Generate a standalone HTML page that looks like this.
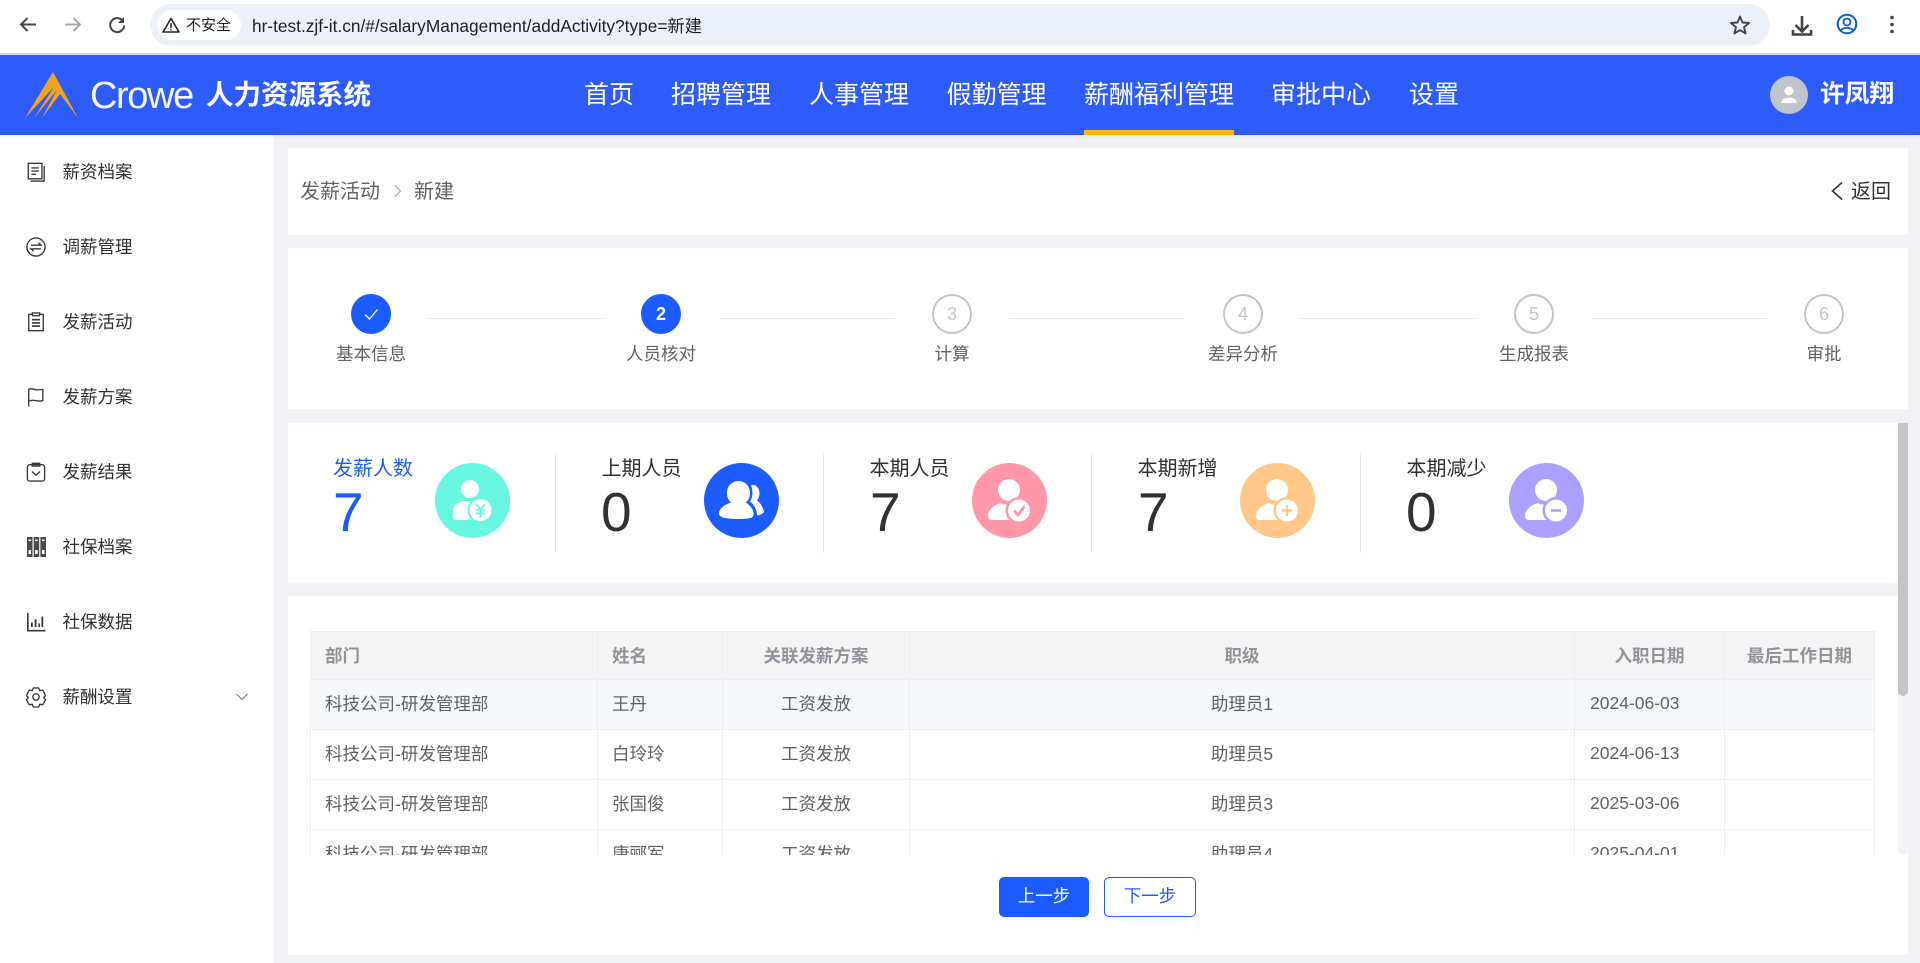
<!DOCTYPE html>
<html lang="zh-CN"><head><meta charset="utf-8"><title>人力资源系统</title>
<style>
html,body{margin:0;padding:0;width:1920px;height:963px;overflow:hidden;background:#f0f2f5}
body{position:relative;font-family:"Liberation Sans","Noto Sans CJK SC",sans-serif;color:#303133}
.a,.t{position:absolute}
.t{white-space:nowrap}
.card{position:absolute;background:#fff}
svg{position:absolute;overflow:visible}
.nav{position:absolute;top:75px;height:40px;line-height:40px;font-size:25px;color:#fff;white-space:nowrap}
.side{position:absolute;left:62.5px;height:26px;line-height:26px;font-size:17.5px;color:#303133;white-space:nowrap}
.si{left:26px;width:20px;height:20px;fill:none;stroke:#3a3a3a;stroke-width:1.5}
.dot{position:absolute;top:294px;width:40px;height:40px;box-sizing:border-box;border-radius:50%;text-align:center;font-size:18px;line-height:36px;border:2.5px solid #c0c4cc;color:#c0c4cc;background:#fff}
.dot.on{background:#1c5cff;border-color:#1c5cff;color:#fff;font-weight:700}
.ln{position:absolute;top:317.5px;height:1px;width:174px;background:#e4e7ed}
.lb{position:absolute;top:341px;height:26px;line-height:26px;width:160px;text-align:center;font-size:17.5px;color:#606266}
.st{position:absolute;top:455px;height:28px;line-height:28px;font-size:20px;color:#303133;white-space:nowrap}
.nm{position:absolute;top:481px;height:62px;line-height:62px;font-size:55px;color:#303133}
.dv{position:absolute;top:453px;width:1px;height:100px;background:#e6e6e6}
.tw{position:absolute;left:310px;top:631px;width:1565px;height:224px;overflow:hidden}
table{border-collapse:collapse;table-layout:fixed;width:1565px;font-size:17.5px;color:#606266}
th,td{border:1px solid #ebeef5;padding:0 15px;white-space:nowrap;text-align:center;box-sizing:border-box}
th{height:48px;background:#f4f4f5;color:#909399;font-weight:700;padding-bottom:1px}
td{height:50px;padding-bottom:2px}
th:nth-child(-n+2),td:nth-child(-n+2){padding-left:14px}
.l{text-align:left}
.btn{position:absolute;top:877px;height:40px;box-sizing:border-box;border-radius:5px;text-align:center;font-size:17.5px;line-height:36px;border:1px solid #1c5cff}
</style></head><body>

<!-- browser chrome -->
<div class="a" style="left:0;top:0;width:1920px;height:53px;background:#fff"></div>
<div class="a" style="left:0;top:53px;width:1920px;height:2px;background:#d9dadc"></div>
<div class="a" style="left:150px;top:4px;width:1620px;height:42px;border-radius:21px;background:#ecf0f9"></div>
<div class="a" style="left:157px;top:10px;width:84px;height:30px;border-radius:15px;background:#fff"></div>
<svg style="left:0;top:0" width="1920" height="53" fill="none">
<path d="M36 24.500H21M27.500 18l-6.500 6.500 6.500 6.500" stroke="#454545" stroke-width="2"/>
<path d="M65 24.500h15M73.500 18l6.500 6.500-6.500 6.500" stroke="#a9a9a9" stroke-width="2"/>
<path d="M122.500 20.500a7 7 0 1 0 1.700 5" stroke="#454545" stroke-width="2"/><path d="M124 17v6h-6z" fill="#454545"/>
<path d="M171 18.500l8 13.500h-16z" stroke="#222" stroke-width="1.600" stroke-linejoin="round"/><path d="M171 23v5M171 29.200v1.300" stroke="#222" stroke-width="1.500"/>
<path d="M1740 16.500l2.500 6 6.500.5-5 4.200 1.600 6.300-5.600-3.400-5.600 3.400 1.600-6.300-5-4.200 6.500-.5z" stroke="#454545" stroke-width="1.900" stroke-linejoin="round"/>
<path d="M1802 16v15M1795.500 25l6.500 6.500 6.500-6.500" stroke="#454545" stroke-width="2.600"/><path d="M1793 30v4.500h18V30" stroke="#454545" stroke-width="2.600"/>
<circle cx="1847" cy="24" r="9.300" stroke="#0b5ed7" stroke-width="2"/><circle cx="1847" cy="22" r="3.500" stroke="#0b5ed7" stroke-width="1.800"/><path d="M1840.500 30.500c3-3.500 10-3.500 13 0" stroke="#0b5ed7" stroke-width="1.800"/>
<circle cx="1892" cy="17.500" r="1.800" fill="#454545"/><circle cx="1892" cy="24.500" r="1.800" fill="#454545"/><circle cx="1892" cy="31.500" r="1.800" fill="#454545"/>
</svg>
<div class="t" style="left:186px;top:15px;line-height:22px;font-size:15px;color:#222">不安全</div>
<div class="t" style="left:252px;top:14px;line-height:24px;font-size:17.300px;color:#1f1f1f">hr-test.zjf-it.cn/#/salaryManagement/addActivity?type=新建</div>

<!-- header -->
<div class="a" style="left:0;top:55px;width:1920px;height:80px;background:#2e5cfa;box-shadow:0 1px 4px rgba(0,0,0,.06);z-index:2"></div>
<div class="a" style="left:0;top:55px;width:0;height:0;z-index:3">
<svg style="left:0;top:-55px" width="100" height="130"><path d="M53 72L78 118 60 94 42 118 57 90 34 118 54 87 25 118Z" fill="#f0a41e"/></svg>
<div class="t" style="left:90px;top:18px;line-height:46px;font-size:38px;letter-spacing:-1.400px;color:#f4f6ff">Crowe</div>
<div class="t" style="left:206px;top:20px;line-height:40px;font-size:27.500px;font-weight:700;color:#fff">人力资源系统</div>
</div>
<div style="position:absolute;left:0;top:0;z-index:3">
<div class="nav" style="left:584px">首页</div>
<div class="nav" style="left:671px">招聘管理</div>
<div class="nav" style="left:809px">人事管理</div>
<div class="nav" style="left:946.500px">假勤管理</div>
<div class="nav" style="left:1084px">薪酬福利管理</div>
<div class="a" style="left:1084px;top:130px;width:150px;height:5px;background:#fcb900"></div>
<div class="nav" style="left:1271px">审批中心</div>
<div class="nav" style="left:1409px">设置</div>
<div class="a" style="left:1770px;top:76px;width:38px;height:38px;border-radius:50%;background:#c0c4cc"></div>
<svg style="left:1770px;top:76px" width="38" height="38"><circle cx="19" cy="15" r="4.500" fill="#fff"/><path d="M11 27c0-7 16-7 16 0z" fill="#fff"/></svg>
<div class="t" style="left:1820px;top:75px;line-height:40px;font-size:24.700px;font-weight:700;color:#fff">许凤翔</div>
</div>

<!-- sidebar -->
<div class="a" style="left:0;top:135px;width:274px;height:828px;background:#fff"></div>
<svg class="si" style="top:162px" viewBox="0 0 22 22"><path d="M2.500 1.500h15v17h-15z"/><path d="M20 4.500v16.500H5"/><path d="M6 6.500h8M6 10h8M6 13.500h5"/></svg>
<div class="side" style="top:159px">薪资档案</div>
<svg class="si" style="top:237px" viewBox="0 0 22 22"><circle cx="11" cy="11" r="10"/><path d="M5.500 9h11l-3-2.500M16.500 13h-11l3 2.500"/></svg>
<div class="side" style="top:234px">调薪管理</div>
<svg class="si" style="top:312px" viewBox="0 0 22 22"><path d="M7 2.500H3v18h16v-18H15"/><path d="M7 1h8v3H7z"/><path d="M6.500 8.500h9M6.500 12h9M6.500 15.500h9" stroke-width="1.800"/></svg>
<div class="side" style="top:309px">发薪活动</div>
<svg class="si" style="top:387px" viewBox="0 0 22 22"><path d="M3 21.500V2.500c3-1.500 5 0 8 .5s5 0 7.500-.5V15c-3 1-5 .5-7.500 0s-5-.5-8 .5"/></svg>
<div class="side" style="top:384px">发薪方案</div>
<svg class="si" style="top:462px" viewBox="0 0 22 22"><rect x="1.500" y="3" width="19" height="18" rx="2.500"/><path d="M7 1.500h8v3H7z"/><path d="M6.500 10.500l4.500 4 4.500-4"/></svg>
<div class="side" style="top:459px">发薪结果</div>
<svg style="left:27px;top:537px" width="19" height="20"><path d="M0 0h5.500v20H0zM6.700 0h5.500v20H6.700zM13.400 0H19v20h-5.600z" fill="#4a4a4a"/><path d="M1.500 2.500h2.500v1.500H1.500zM8.200 2.500h2.500v1.500H8.200zM15 2.500h2.500v1.500H15zM1.500 13h2.500v4H1.500zM8.200 13h2.500v4H8.200zM15 13h2.500v4H15z" fill="#fff"/></svg>
<div class="side" style="top:534px">社保档案</div>
<svg class="si" style="top:612px" viewBox="0 0 22 22"><path d="M2 1v19.500h19.500" stroke-width="1.800"/><path d="M6.500 16.500v-5M10.500 16.500V8M14.500 16.500v-4M18 16.500V5" stroke-width="2"/></svg>
<div class="side" style="top:609px">社保数据</div>
<svg class="si" style="top:687px" viewBox="0 0 22 22"><path d="M8 1h6l1 3 3.500-.5 3 6-2 2 2 2.500-3 5.500-3.500-.5-1 3H8l-1-3-3.500.5-3-5.500 2-2.500-2-2 3-6L7 4z" stroke-linejoin="round"/><circle cx="11" cy="11" r="3.500"/></svg>
<div class="side" style="top:684px">薪酬设置</div>
<svg style="left:236px;top:693px" width="12" height="8" fill="none"><path d="M.5 1l5.500 5.500L11.500 1" stroke="#777" stroke-width="1.100"/></svg>

<!-- breadcrumb -->
<div class="card" style="left:288px;top:148px;width:1620px;height:87px"></div>
<div class="t" style="left:300px;top:178px;line-height:28px;font-size:20px;color:#606266">发薪活动</div>
<svg style="left:393px;top:184px" width="10" height="14" fill="none"><path d="M1.500 1l6 6-6 6" stroke="#a8abb2" stroke-width="1.200"/></svg>
<div class="t" style="left:414px;top:178px;line-height:28px;font-size:20px;color:#606266">新建</div>
<svg style="left:1830px;top:181px" width="14" height="20" fill="none"><path d="M12 1.500L2.500 10l9.500 8.500" stroke="#303133" stroke-width="1.600"/></svg>
<div class="t" style="left:1851px;top:178px;line-height:28px;font-size:20px;color:#303133">返回</div>

<!-- steps -->
<div class="card" style="left:288px;top:248px;width:1620px;height:161px"></div>
<div class="ln" style="left:429px"></div><div class="ln" style="left:720px"></div><div class="ln" style="left:1010px"></div><div class="ln" style="left:1301px"></div><div class="ln" style="left:1592px"></div>
<div class="dot on" style="left:351px"></div>
<svg style="left:351px;top:294px" width="40" height="40" fill="none"><path d="M14 20.500l4.500 4.500 8-9.500" stroke="#fff" stroke-width="1.300"/></svg>
<div class="dot on" style="left:641px">2</div>
<div class="dot" style="left:932px">3</div>
<div class="dot" style="left:1223px">4</div>
<div class="dot" style="left:1514px">5</div>
<div class="dot" style="left:1804px">6</div>
<div class="lb" style="left:291px">基本信息</div>
<div class="lb" style="left:581px">人员核对</div>
<div class="lb" style="left:872px">计算</div>
<div class="lb" style="left:1163px">差异分析</div>
<div class="lb" style="left:1454px">生成报表</div>
<div class="lb" style="left:1744px">审批</div>

<!-- stats -->
<div class="card" style="left:288px;top:423px;width:1620px;height:160px"></div>
<div class="st" style="left:333px;color:#1c5cff">发薪人数</div><div class="nm" style="left:333px;color:#1c5cff">7</div>
<div class="st" style="left:601.500px">上期人员</div><div class="nm" style="left:601px">0</div>
<div class="st" style="left:869.500px">本期人员</div><div class="nm" style="left:870px">7</div>
<div class="st" style="left:1137.500px">本期新增</div><div class="nm" style="left:1138px">7</div>
<div class="st" style="left:1406.500px">本期减少</div><div class="nm" style="left:1406px">0</div>
<div class="dv" style="left:555px"></div><div class="dv" style="left:823px"></div><div class="dv" style="left:1091px"></div><div class="dv" style="left:1360px"></div>

<svg style="left:434.500px;top:463px" width="75" height="75">
<circle cx="37.500" cy="37.500" r="37.500" fill="#6af7e2"/><circle cx="35" cy="26" r="9" fill="#fff"/>
<path d="M18 54v-6c0-7 7-10 15-10h6c6 0 9 2 9 5v14H21c-2 0-3-1-3-3z" fill="#fff"/>
<circle cx="45.500" cy="47" r="13" fill="#6af7e2"/><circle cx="45.500" cy="47" r="11" fill="#fff"/>
<path d="M41 41l4.500 5.500L50 41M41 47h9M41 50.500h9M45.500 46v9" stroke="#6af7e2" stroke-width="1.800" fill="none"/></svg>

<svg style="left:704px;top:463px" width="75" height="75">
<circle cx="37.500" cy="37.500" r="37.500" fill="#1c5cff"/>
<path d="M47 22c5-1 8.500 3 8.500 8 0 4-1.500 6-2.500 7.500 3 2 6 6 7 11.500-1 2-4 3-7 3.500 0-6-3-11-7-14 2.500-3.500 3.500-10 1-16.500z" fill="#fff"/>
<path d="M34.500 18c-7 0-11.500 5.500-11.500 12 0 4 1.500 7 4 9.500-7.500 2.500-12 6.500-12 11 0 3.500 5 5.500 19.500 5.500s15-2 15-5.500c0-4.500-4-8.500-7.500-11 2.500-2.500 4-5.500 4-9.500 0-6.500-4.500-12-11.500-12z" fill="#fff"/></svg>

<svg style="left:972px;top:463px" width="75" height="75">
<circle cx="37.500" cy="37.500" r="37.500" fill="#ff97a8"/><circle cx="37" cy="27" r="11" fill="#fff"/>
<path d="M16 53c0-6 6-11 13-13 3 2 7 2 11 0l6 17H20c-3 0-4-2-4-4z" fill="#fff"/>
<circle cx="47" cy="47.500" r="13.500" fill="#ff97a8"/><circle cx="47" cy="47.500" r="11" fill="#fff"/>
<path d="M42 47.500l4 4.500 6.500-8.500" stroke="#ff97a8" stroke-width="2.800" fill="none"/></svg>

<svg style="left:1240px;top:463px" width="75" height="75">
<circle cx="37.500" cy="37.500" r="37.500" fill="#ffc889"/><circle cx="37" cy="27" r="11" fill="#fff"/>
<path d="M16 53c0-6 6-11 13-13 3 2 7 2 11 0l6 17H20c-3 0-4-2-4-4z" fill="#fff"/>
<circle cx="47" cy="47.500" r="13.500" fill="#ffc889"/><circle cx="47" cy="47.500" r="11" fill="#fff"/>
<path d="M47 42v11M41.500 47.500h11" stroke="#ffc889" stroke-width="2.200" fill="none"/></svg>

<svg style="left:1509px;top:463px" width="75" height="75">
<circle cx="37.500" cy="37.500" r="37.500" fill="#aba0ff"/><circle cx="37" cy="27" r="11" fill="#fff"/>
<path d="M16 53c0-6 6-11 13-13 3 2 7 2 11 0l6 17H20c-3 0-4-2-4-4z" fill="#fff"/>
<circle cx="47" cy="47.500" r="13.500" fill="#aba0ff"/><circle cx="47" cy="47.500" r="11" fill="#fff"/>
<path d="M42 47.500h10" stroke="#aba0ff" stroke-width="2.600" fill="none"/></svg>

<!-- table card -->
<div class="card" style="left:288px;top:596px;width:1620px;height:359px"></div>
<div class="tw"><table>
<colgroup><col style="width:287px"><col style="width:125px"><col style="width:187px"><col style="width:665px"><col style="width:150px"><col style="width:150px"></colgroup>
<tr><th class="l">部门</th><th class="l">姓名</th><th>关联发薪方案</th><th>职级</th><th>入职日期</th><th>最后工作日期</th></tr>
<tr style="background:#f5f7fa"><td class="l">科技公司-研发管理部</td><td class="l">王丹</td><td>工资发放</td><td>助理员1</td><td class="l">2024-06-03</td><td></td></tr>
<tr><td class="l">科技公司-研发管理部</td><td class="l">白玲玲</td><td>工资发放</td><td>助理员5</td><td class="l">2024-06-13</td><td></td></tr>
<tr><td class="l">科技公司-研发管理部</td><td class="l">张国俊</td><td>工资发放</td><td>助理员3</td><td class="l">2025-03-06</td><td></td></tr>
<tr><td class="l">科技公司-研发管理部</td><td class="l">康郦军</td><td>工资发放</td><td>助理员4</td><td class="l">2025-04-01</td><td></td></tr>
</table></div>

<!-- scrollbar -->
<div class="a" style="left:1898px;top:423px;width:10px;height:432px;background:#f3f3f3;border-radius:0 0 5px 5px"></div>
<div class="a" style="left:1898px;top:423px;width:10px;height:273px;background:#c4c4c4;border-radius:0 0 5px 5px"></div>

<div class="btn" style="left:999px;width:90px;background:#1c5cff;color:#fff">上一步</div>
<div class="btn" style="left:1104px;width:92px;background:#fff;color:#1c5cff">下一步</div>
</body></html>
